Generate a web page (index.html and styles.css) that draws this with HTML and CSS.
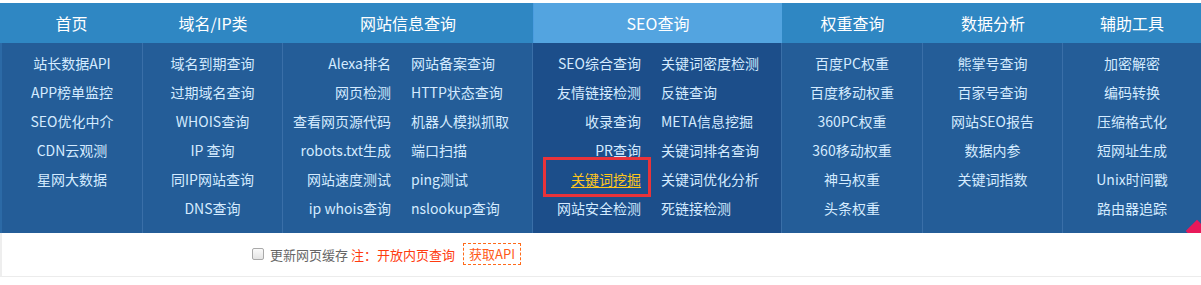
FILE: index.html
```html
<!DOCTYPE html>
<html lang="zh-CN">
<head>
<meta charset="utf-8">
<title>SEO查询</title>
<link rel="stylesheet" href="styles.css">
</head>
<body>
<div class="topgap"></div>
<nav class="nav">
  <a class="tab w1">首页</a>
  <a class="tab w2">域名/IP类</a>
  <a class="tab w3">网站信息查询</a>
  <a class="tab w4 active">SEO查询</a>
  <a class="tab w5">权重查询</a>
  <a class="tab w6">数据分析</a>
  <a class="tab w7">辅助工具</a>
</nav>
<div class="panel">
  <div class="col w1 single">
    <a>站长数据API</a><a>APP榜单监控</a><a>SEO优化中介</a><a>CDN云观测</a><a>星网大数据</a>
  </div>
  <div class="col w2 single">
    <a>域名到期查询</a><a>过期域名查询</a><a>WHOIS查询</a><a>IP 查询</a><a>同IP网站查询</a><a>DNS查询</a>
  </div>
  <div class="col w3 double">
    <a class="l">Alexa排名</a><a class="r">网站备案查询</a>
    <a class="l">网页检测</a><a class="r">HTTP状态查询</a>
    <a class="l">查看网页源代码</a><a class="r">机器人模拟抓取</a>
    <a class="l">robots.txt生成</a><a class="r">端口扫描</a>
    <a class="l">网站速度测试</a><a class="r">ping测试</a>
    <a class="l">ip whois查询</a><a class="r">nslookup查询</a>
  </div>
  <div class="col w4 double dark">
    <a class="l">SEO综合查询</a><a class="r">关键词密度检测</a>
    <a class="l">友情链接检测</a><a class="r">反链查询</a>
    <a class="l">收录查询</a><a class="r">META信息挖掘</a>
    <a class="l">PR查询</a><a class="r">关键词排名查询</a>
    <a class="l hl"><span class="mark"></span><span class="hltext">关键词挖掘</span></a><a class="r">关键词优化分析</a>
    <a class="l">网站安全检测</a><a class="r">死链接检测</a>
  </div>
  <div class="col w5 single">
    <a>百度PC权重</a><a>百度移动权重</a><a>360PC权重</a><a>360移动权重</a><a>神马权重</a><a>头条权重</a>
  </div>
  <div class="col w6 single">
    <a>熊掌号查询</a><a>百家号查询</a><a>网站SEO报告</a><a>数据内参</a><a>关键词指数</a>
  </div>
  <div class="col w7 single">
    <a>加密解密</a><a>编码转换</a><a>压缩格式化</a><a>短网址生成</a><a>Unix时间戳</a><a>路由器追踪</a>
  </div>
  <span class="corner"></span>
</div>
<div class="opts">
  <label class="chk"><span class="box"></span>更新网页缓存</label>
  <span class="note">注：开放内页查询</span>
  <a class="api">获取API</a>
</div>
```

FILE: styles.css
```css
* { box-sizing: border-box; }
html, body { margin: 0; padding: 0; background: #fff; }
body {
  width: 1201px;
  height: 285px;
  overflow: hidden;
  font-family: "Noto Sans CJK SC", "Noto Sans", sans-serif;
}
a { text-decoration: none; cursor: pointer; }

.topgap { height: 3px; background: #fff; }

.w1 { width: 143px; }
.w2 { width: 140px; }
.w3 { width: 250px; }
.w4 { width: 249px; }
.w5 { width: 141px; }
.w6 { width: 140px; }
.w7 { flex: 1; }

.nav {
  display: flex;
  height: 40px;
  background: #2f87c3;
}
.tab {
  display: block;
  height: 40px;
  line-height: 40px;
  text-align: center;
  color: #fff;
  font-size: 16px;
}
.tab.active { background: #53a4e0; border-left: 1px solid #4b9de0; }

.panel {
  position: relative;
  display: flex;
  height: 190px;
  background: #245d98;
  border-left: 2px solid #2c6aa6;
  overflow: hidden;
}
.col {
  padding: 6px 0 10px;
  border-right: 1px solid #3a6fa8;
}
.col.w1 { width: 141px; }
.col.w7 { border-right: 0; }
.col a {
  display: block;
  height: 29px;
  line-height: 29px;
  font-size: 14px;
  color: #d4ebff;
  white-space: nowrap;
}
.single a { text-align: center; }
.double {
  display: grid;
  grid-template-columns: 118px 1fr;
  align-content: start;
}
.double .l { text-align: right; padding-right: 10px; }
.double .r { text-align: left; padding-left: 10px; }
.dark { background: #1c4e8a; border-right-color: #3a6fa8; }

.hl { position: relative; }
.hltext {
  color: #ffc61c;
  text-decoration: underline;
  text-underline-offset: 2px;
}
.mark {
  position: absolute;
  left: 10px;
  right: 0;
  top: -8px;
  bottom: -3px;
  border: 3px solid #e8333a;
}

.corner {
  position: absolute;
  right: -4px;
  bottom: -6px;
  width: 16px;
  height: 16px;
  background: #e8195a;
  transform: rotate(45deg);
}

.opts {
  display: flex;
  align-items: center;
  height: 44px;
  padding-left: 250px;
  padding-bottom: 1px;
  border-bottom: 1px solid #ececec;
  border-left: 2px solid #eeeeee;
  font-size: 13px;
}
.chk {
  display: flex;
  align-items: center;
  color: #666;
}
.box {
  display: inline-block;
  width: 12px;
  height: 12px;
  margin-right: 6px;
  border: 1px solid #a9a9a9;
  border-radius: 2px;
  background: linear-gradient(#fafafa, #e4e4e4);
}
.note { color: #ff3b0f; margin-left: 3px; }
.api {
  margin-left: 8px;
  padding: 0 5px;
  height: 22px;
  line-height: 20px;
  color: #ff5a1a;
  border: 1px dashed #ff6a1a;
}
```
